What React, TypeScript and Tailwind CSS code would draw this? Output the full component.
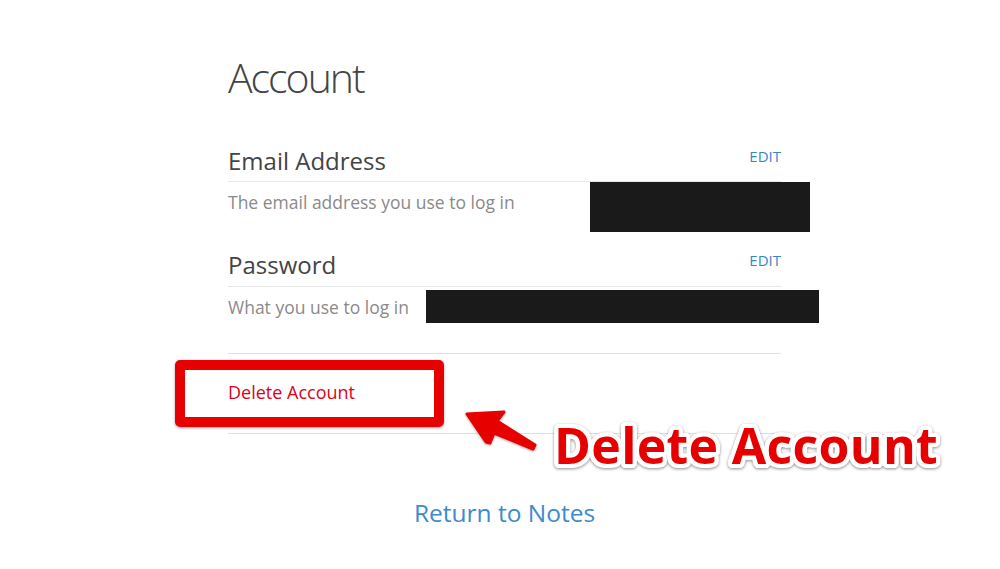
import React from "react";

export default function App() {
  return (
    <div
      className="relative w-[1000px] h-[569px] bg-white overflow-hidden"
      style={{ fontFamily: '"Open Sans", "Noto Sans", sans-serif' }}
    >
      <div className="ml-[228px] w-[553px] pt-[57px]">
        <h1 className="text-[41px] leading-[41px] font-light text-[#444] tracking-[-2px]">Account</h1>

        <section className="mt-[47px]">
          <div className="flex justify-between items-start h-[37px] border-b border-[#e6e6e6]">
            <h2 className="text-[24px] leading-[32px] text-[#444]">Email Address</h2>
            <a className="mt-[1px] text-[15px] leading-[20px] text-[#3b86c8]">EDIT</a>
          </div>
          <p className="mt-[8px] text-[17.5px] leading-[24px] text-[#8a8a8a]">
            The email address you use to log in
          </p>
        </section>

        <section className="mt-[35px]">
          <div className="flex justify-between items-start h-[38px] border-b border-[#e6e6e6]">
            <h2 className="text-[24px] leading-[32px] text-[#444]">Password</h2>
            <a className="mt-[1px] text-[15px] leading-[20px] text-[#3b86c8]">EDIT</a>
          </div>
          <p className="mt-[8px] text-[17.5px] leading-[24px] text-[#8a8a8a]">What you use to log in</p>
        </section>

        <div className="mt-[34px] border-t border-[#e0e0e0]">
          <a className="block mt-[26px] text-[18px] leading-[24px] text-[#e0001b]">Delete Account</a>
          <div className="mt-[29px] border-t border-[#e0e0e0]" />
        </div>

        <div className="mt-[63px] text-center">
          <a className="text-[24.5px] leading-[32px] text-[#3d8bcd]">Return to Notes</a>
        </div>
      </div>

      {/* redaction overlays */}
      <div className="absolute left-[590px] top-[182px] w-[220px] h-[50px] bg-[#1a1a1a]" />
      <div className="absolute left-[426px] top-[290px] w-[393px] h-[33px] bg-[#1a1a1a]" />

      {/* highlight box */}
      <div className="absolute left-[175px] top-[360px] w-[269px] h-[67px] border-[10px] border-[#e60000] rounded-[5px] shadow-[0_1px_3px_rgba(0,0,0,0.35)]" />

      {/* arrow */}
      <svg className="absolute left-0 top-0" width="1000" height="569" viewBox="0 0 1000 569">
        <defs>
          <filter id="sh" x="-20%" y="-20%" width="140%" height="140%">
            <feDropShadow dx="0" dy="1" stdDeviation="1.2" floodColor="#000" floodOpacity="0.35" />
          </filter>
        </defs>
        <polygon
          points="467,414 504,412 497,421 535,445 533,449 494,433 490,443 486,442"
          fill="#e60000"
          stroke="#e60000"
          strokeWidth="3"
          strokeLinejoin="round"
          filter="url(#sh)"
        />
      </svg>

      {/* annotation text */}
      <div
        className="absolute left-[554px] top-[420px] text-[50px] leading-[50px] font-bold tracking-[0.3px] text-[#e60000] whitespace-nowrap [text-shadow:4px_0_0_#fff,-4px_0_0_#fff,0_4px_0_#fff,0_-4px_0_#fff,3px_3px_0_#fff,-3px_3px_0_#fff,3px_-3px_0_#fff,-3px_-3px_0_#fff,2px_4px_0_#fff,-2px_4px_0_#fff,4px_2px_0_#fff,-4px_2px_0_#fff,2px_-4px_0_#fff,-2px_-4px_0_#fff,4px_-2px_0_#fff,-4px_-2px_0_#fff] drop-shadow-[0_1px_1.5px_rgba(0,0,0,0.45)]"
      >
        Delete Account
      </div>
    </div>
  );
}
